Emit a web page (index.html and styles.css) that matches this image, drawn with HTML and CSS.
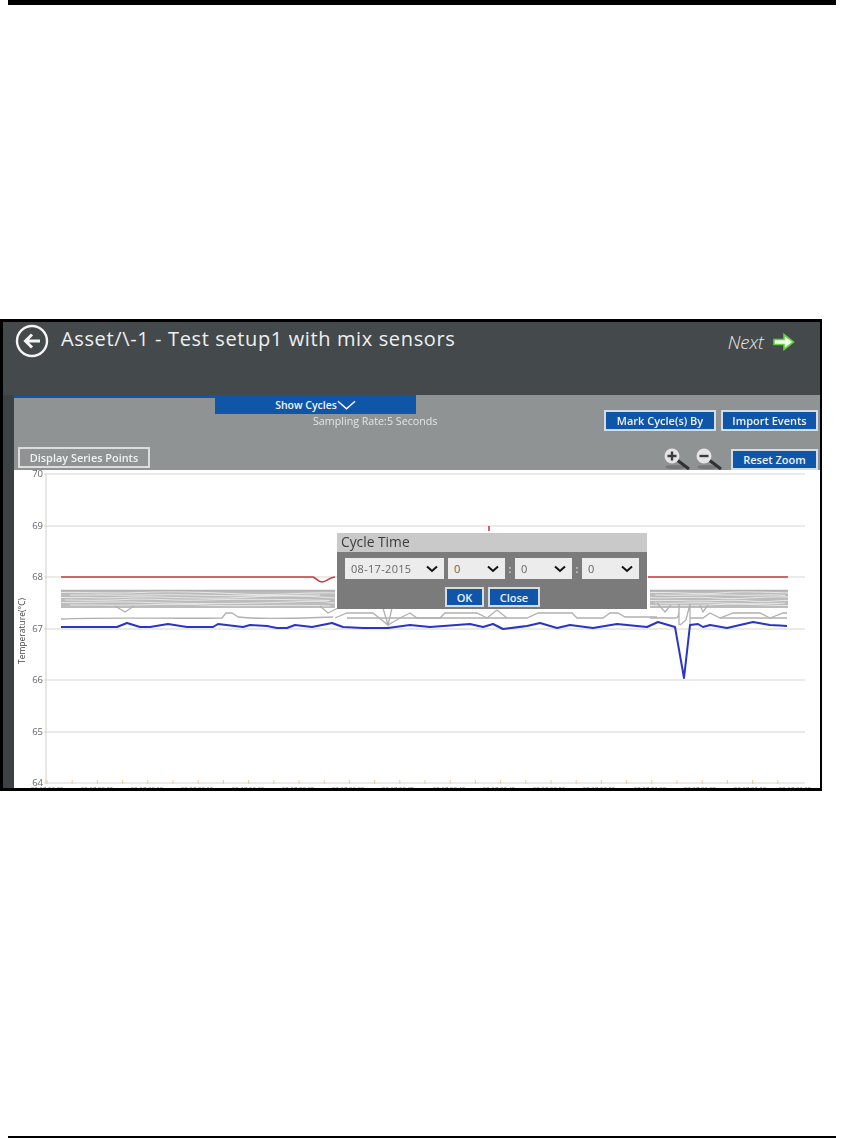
FILE: index.html
```html
<!DOCTYPE html>
<html lang="en">
<head>
<meta charset="utf-8">
<title>Cycle Time</title>
<link rel="stylesheet" href="styles.css">
</head>
<body>
<div class="rule-top"></div>
<figure class="frame">
  <div class="screen">
    <header class="head">
      <div class="head-left">
        <svg class="back" viewBox="0 0 34 34" width="34" height="34"><circle cx="17" cy="17" r="15" fill="none" stroke="#f4f4f4" stroke-width="2.4"/><path d="M25 17H11M17 10.5L10.5 17L17 23.500" fill="none" stroke="#f4f4f4" stroke-width="3"/></svg>
        <h1 class="title">Asset/\-1 - Test setup1 with mix sensors</h1>
      </div>
      <div class="next">
        <span class="next-label">Next</span>
        <svg viewBox="0 0 22 18" width="22" height="18"><path d="M1 6.500H11V1.500L20.500 9L11 16.500V11.500H1Z" fill="#f2fff0" stroke="#5fd13a" stroke-width="1.6"/></svg>
      </div>
    </header>
    <div class="body">
      <div class="strip"></div>
      <main class="main">
        <section class="toolbar">
          <div class="tool-left">
            <div class="tabs">
              <div class="tab-line"></div>
              <div class="tab">Show Cycles<svg viewBox="0 0 20 10" width="19" height="10"><path d="M1 1L10 9L19 1" fill="none" stroke="#fff" stroke-width="1.500"/></svg></div>
            </div>
            <div class="rate">Sampling Rate:5 Seconds</div>
            <button class="btn btn-ghost">Display Series Points</button>
          </div>
          <div class="tool-right">
            <div class="actions">
              <button class="btn btn-blue btn-mark">Mark Cycle(s) By</button>
              <button class="btn btn-blue btn-import">Import Events</button>
            </div>
            <div class="actions zoom-row">
              <svg class="glass" viewBox="0 0 30 24" width="30" height="24"><ellipse cx="13" cy="20" rx="10" ry="2" fill="#777"/><path d="M15 13L27 22" stroke="#2f3233" stroke-width="3"/><circle cx="10" cy="9" r="7.500" fill="#e4e4e4"/><path d="M5.500 9H14.500M10 4.500V13.500" stroke="#3a3d3e" stroke-width="2.400"/></svg>
              <svg class="glass" viewBox="0 0 30 24" width="30" height="24"><ellipse cx="13" cy="20" rx="10" ry="2" fill="#777"/><path d="M15 13L27 22" stroke="#2f3233" stroke-width="3"/><circle cx="10" cy="9" r="7.500" fill="#e4e4e4"/><path d="M5.500 9H14.500" stroke="#3a3d3e" stroke-width="2.400"/></svg>
              <button class="btn btn-blue btn-reset">Reset Zoom</button>
            </div>
          </div>
        </section>
        <section class="chart">
          <svg class="plot" viewBox="14 470 806 318" width="806" height="318">
            <g class="grid">
              <path d="M44 474H805M44 526H805M44 577H805M44 629H805M44 680H805M44 732H805M44 783H805"/>
              <path d="M46 474V784"/>
            </g>
            <path class="ticks" d="M47 784v-4m25.200 4v-4m25.200 4v-4m25.200 4v-4m25.200 4v-4m25.200 4v-4m25.200 4v-4m25.200 4v-4m25.200 4v-4m25.200 4v-4m25.200 4v-4m25.200 4v-4m25.200 4v-4m25.200 4v-4m25.200 4v-4m25.200 4v-4m25.200 4v-4m25.200 4v-4m25.200 4v-4m25.200 4v-4m25.200 4v-4m25.200 4v-4m25.200 4v-4m25.200 4v-4m25.200 4v-4m25.200 4v-4m25.200 4v-4m25.200 4v-4m25.200 4v-4m25.200 4v-4"/>
            <g class="ylabels">
              <text x="43" y="477">70</text>
              <text x="43" y="529">69</text>
              <text x="43" y="580">68</text>
              <text x="43" y="632">67</text>
              <text x="43" y="683">66</text>
              <text x="43" y="735">65</text>
              <text x="43" y="786">64</text>
            </g>
            <g class="xlabels">
              <text x="47" y="790.500">08-17 00:00</text><text x="97" y="790.500">08-17 00:05</text><text x="147" y="790.500">08-17 00:10</text><text x="197" y="790.500">08-17 00:15</text>
              <text x="248" y="790.500">08-17 00:20</text><text x="298" y="790.500">08-17 00:25</text><text x="348" y="790.500">08-17 00:30</text><text x="398" y="790.500">08-17 00:35</text>
              <text x="449" y="790.500">08-17 00:40</text><text x="499" y="790.500">08-17 00:45</text><text x="549" y="790.500">08-17 00:50</text><text x="599" y="790.500">08-17 00:55</text>
              <text x="650" y="790.500">08-17 01:00</text><text x="700" y="790.500">08-17 01:05</text><text x="750" y="790.500">08-17 01:10</text><text x="795" y="790.500">08-17 01:15</text>
            </g>
            <text class="yname" transform="translate(25 631) rotate(-90)">Temperature(°C)</text>
            <rect class="band" x="61" y="590" width="274" height="18"/>
            <rect class="band" x="650" y="590" width="138" height="18"/>
            <g class="streaks">
              <path d="M61 592.500C90 592 110 594 140 592.500S200 592 240 594S300 592 335 593"/>
              <path d="M70 595H110C130 596 150 594 190 595S260 596 320 595"/>
              <path d="M61 597.500H90C110 599 130 596 160 597S220 599 250 597S310 596 335 598"/>
              <path d="M65 600C80 600 100 601 125 599.500S170 601 205 600S270 599 330 600.500"/>
              <path d="M61 602.500C85 603 110 601 150 602.500S240 604 290 602S320 603 335 603"/>
              <path d="M70 605H100C130 606 170 603 205 605S290 604 330 606"/>
              <path d="M650 592.500C680 592 700 595 720 593S760 592 788 593"/>
              <path d="M655 595C680 596 705 594 730 595S770 594 785 595.500"/>
              <path d="M650 597.500C670 599 690 596 715 598S760 596 788 597"/>
              <path d="M650 600.500H680C700 602 730 599 750 601S775 600 788 600.500"/>
              <path d="M655 603C675 604 695 602 720 603S770 604 785 603"/>
              <path d="M650 605.500C675 605 695 606 720 604.500S770 606 788 605.500"/>
            </g>
            <g class="greys">
              <path d="M61 590.500H335M650 590.500H788"/>
              <path d="M115 606L125 612L134 606M320 606L328 613L338 608"/>
              <path d="M61 619C110 617 170 619 222 618L226 613H232L238 617C260 620 300 618 333 617"/>
              <path d="M335 618L347 613H373L388 625L392 608L388 625L383 608L388 625L400 618L410 613L417 618H440L445 613H477L487 618L497 610L507 618"/>
              <path d="M347 618H440H507H527L538 613H572L577 618H603L610 613H618L625 617H650L657 617"/>
              <path d="M650 618H676C680 618 679 604 679 604V625M680 625L686 620L690 604V626M690 618H703L710 613L720 618L733 613H760L770 618L783 613H787"/>
              <path d="M720 618H787"/>
              <path d="M657 603L665 612L671 605M700 605L703 612L708 605"/>
            </g>
            <path class="red" d="M61 577H313C316 578 318 582 322 582C327 582 329 577 335 577M648 577H788"/>
            <path class="red" d="M489 526V531"/>
            <path class="blue" d="M61 627H117L127 623L140 627H150L168 624L187 627H213L218 624L243 627L250 625L267 626L277 628H287L295 625L312 627L332 623L343 627L363 628L388 628L410 625L430 627L470 624L483 627L493 624L503 629L527 626L540 623L557 628L570 625L593 628L617 624L647 627L658 622L675 627L684 678L690 625L698 624L703 627L710 625L727 628L740 625L753 622L770 625L787 626"/>
          </svg>
          <div class="dialog">
            <div class="dialog-title">Cycle Time</div>
            <div class="dialog-body">
              <div class="fields">
                <div class="field field-date"><span>08-17-2015</span><svg viewBox="0 0 12 8" width="12" height="8"><path d="M1 1.500L6 6L11 1.500" fill="none" stroke="#111" stroke-width="2"/></svg></div>
                <div class="field"><span>0</span><svg viewBox="0 0 12 8" width="12" height="8"><path d="M1 1.500L6 6L11 1.500" fill="none" stroke="#111" stroke-width="2"/></svg></div>
                <span class="colon">:</span>
                <div class="field"><span>0</span><svg viewBox="0 0 12 8" width="12" height="8"><path d="M1 1.500L6 6L11 1.500" fill="none" stroke="#111" stroke-width="2"/></svg></div>
                <span class="colon">:</span>
                <div class="field"><span>0</span><svg viewBox="0 0 12 8" width="12" height="8"><path d="M1 1.500L6 6L11 1.500" fill="none" stroke="#111" stroke-width="2"/></svg></div>
              </div>
              <div class="dialog-actions">
                <button class="btn btn-blue btn-ok">OK</button>
                <button class="btn btn-blue btn-close">Close</button>
              </div>
            </div>
          </div>
        </section>
      </main>
    </div>
  </div>
</figure>
<div class="rule-bottom"></div>
</body>
</html>
```
FILE: styles.css
```css
html, body {
  margin: 0;
  padding: 0;
  background: #fff;
}
body {
  width: 843px;
  height: 1138px;
  overflow: hidden;
  font-family: "Open Sans", "Liberation Sans", sans-serif;
}
.rule-top {
  height: 5px;
  width: 828px;
  margin: 0 0 314px 8px;
  background: #000;
}
.rule-bottom {
  height: 2px;
  width: 828px;
  margin: 345px 0 0 8px;
  background: #000;
}
.frame {
  margin: 0;
  width: 817px;
  height: 466px;
  border: 3px solid #000;
  border-right-width: 2px;
  overflow: hidden;
}
.screen {
  height: 466px;
  display: flex;
  flex-direction: column;
  filter: blur(0.55px);
}
.head {
  height: 73px;
  flex: none;
  background: #44494b;
  display: flex;
  justify-content: space-between;
  align-items: flex-start;
  padding: 2px 25px 0 12px;
  box-sizing: border-box;
}
.head-left {
  display: flex;
  align-items: center;
  gap: 12px;
}
.title {
  margin: -6px 0 0;
  font-size: 20px;
  font-weight: 400;
  color: #eef0f0;
  letter-spacing: 0.63px;
}
.next {
  display: flex;
  align-items: center;
  gap: 9px;
  padding-top: 5px;
}
.next-label {
  font-size: 18.500px;
  font-style: italic;
  font-weight: 300;
  color: #e8e8e8;
}
.body {
  flex: 1;
  display: flex;
  min-height: 0;
}
.strip {
  width: 11px;
  flex: none;
  background: #3c4143;
}
.main {
  flex: 1;
  display: flex;
  flex-direction: column;
  min-width: 0;
}
.toolbar {
  height: 75px;
  flex: none;
  background: #8f9393;
  display: flex;
  justify-content: space-between;
  box-sizing: border-box;
}
.tool-left {
  display: flex;
  flex-direction: column;
  align-items: flex-start;
}
.tabs { display: flex; }
.tab-line {
  width: 201px;
  height: 3px;
  background: #0f56a8;
}
.tab {
  width: 201px;
  height: 19px;
  background: #0f56a8;
  color: #f2f4f6;
  font-size: 10.5px;
  font-weight: 600;
  display: flex;
  justify-content: center;
  align-items: center;
  box-sizing: border-box;
}
.rate {
  margin: 0 0 0 299px;
  font-size: 10.7px;
  color: #e4e6e6;
  line-height: 15px;
}
.btn {
  font-family: "Open Sans", "Liberation Sans", sans-serif;
  font-size: 11px;
  font-weight: 600;
  color: #f0f2f4;
  padding: 0;
  box-sizing: border-box;
  height: 21px;
  cursor: pointer;
}
.btn-ghost {
  width: 132px;
  font-size: 10.900px;
  background: #8f9393;
  border: 2px solid #dcdcdc;
  margin: 18px 0 0 4px;
}
.btn-blue {
  background: #0f56a8;
  border: 2px solid #d5dde4;
}
.tool-right {
  padding: 15px 2px 0 0;
  display: flex;
  flex-direction: column;
  align-items: flex-end;
  gap: 16px;
}
.actions {
  display: flex;
  align-items: center;
  gap: 5px;
}
.btn-mark { width: 112px; }
.btn-import { width: 97px; }
.btn-reset { width: 87px; margin-left: 5px; }
.zoom-row { gap: 2px; }
.glass { display: block; }
.chart {
  flex: 1;
  position: relative;
  background: #fff;
  overflow: hidden;
}
.plot { display: block; }
.grid path {
  fill: none;
  stroke: #d6d6d0;
  stroke-width: 1.2;
}
.ticks {
  fill: none;
  stroke: #e8cb94;
  stroke-width: 1;
}
.ylabels text {
  font-family: "Open Sans", "Liberation Sans", sans-serif;
  font-size: 9.500px;
  fill: #666;
  text-anchor: end;
}
.xlabels text {
  font-family: "Open Sans", "Liberation Sans", sans-serif;
  font-size: 6px;
  fill: #777;
  text-anchor: middle;
}
.yname {
  font-family: "Open Sans", "Liberation Sans", sans-serif;
  font-size: 8.500px;
  fill: #444;
  text-anchor: middle;
}
.band { fill: #bcbcbc; }
.streaks path {
  fill: none;
  stroke: #f1f1f1;
  stroke-width: 0.8;
}
.greys path {
  fill: none;
  stroke: #b0b0b0;
  stroke-width: 1.3;
}
.red {
  fill: none;
  stroke: #c93a3f;
  stroke-width: 1.6;
}
.blue {
  fill: none;
  stroke: #2a35c4;
  stroke-width: 2;
  stroke-linejoin: round;
}
.dialog {
  position: absolute;
  left: 323px;
  top: 63px;
  width: 310px;
  height: 76px;
  display: flex;
  flex-direction: column;
}
.dialog-title {
  height: 19px;
  background: #c9c9c9;
  color: #3c3c3c;
  font-size: 13.800px;
  font-weight: 500;
  line-height: 18px;
  padding-left: 4px;
}
.dialog-body {
  flex: 1;
  background: #7b7b7b;
  padding: 6px 8px 0;
}
.fields {
  display: flex;
  align-items: center;
}
.field {
  width: 57px;
  height: 21px;
  background: #ececec;
  color: #666;
  font-size: 11px;
  letter-spacing: 0.3px;
  display: flex;
  justify-content: space-between;
  align-items: center;
  padding: 0 6px;
  box-sizing: border-box;
}
.field-date {
  width: 99px;
  margin-right: 4px;
}
.colon {
  width: 10px;
  text-align: center;
  font-size: 10px;
  color: #cfcfcf;
  font-weight: 700;
}
.dialog-actions {
  display: flex;
  justify-content: center;
  gap: 4px;
  margin: 8px 0 0 1px;
}
.btn-ok { width: 39px; height: 20px; }
.btn-close { width: 52px; height: 20px; }
```
